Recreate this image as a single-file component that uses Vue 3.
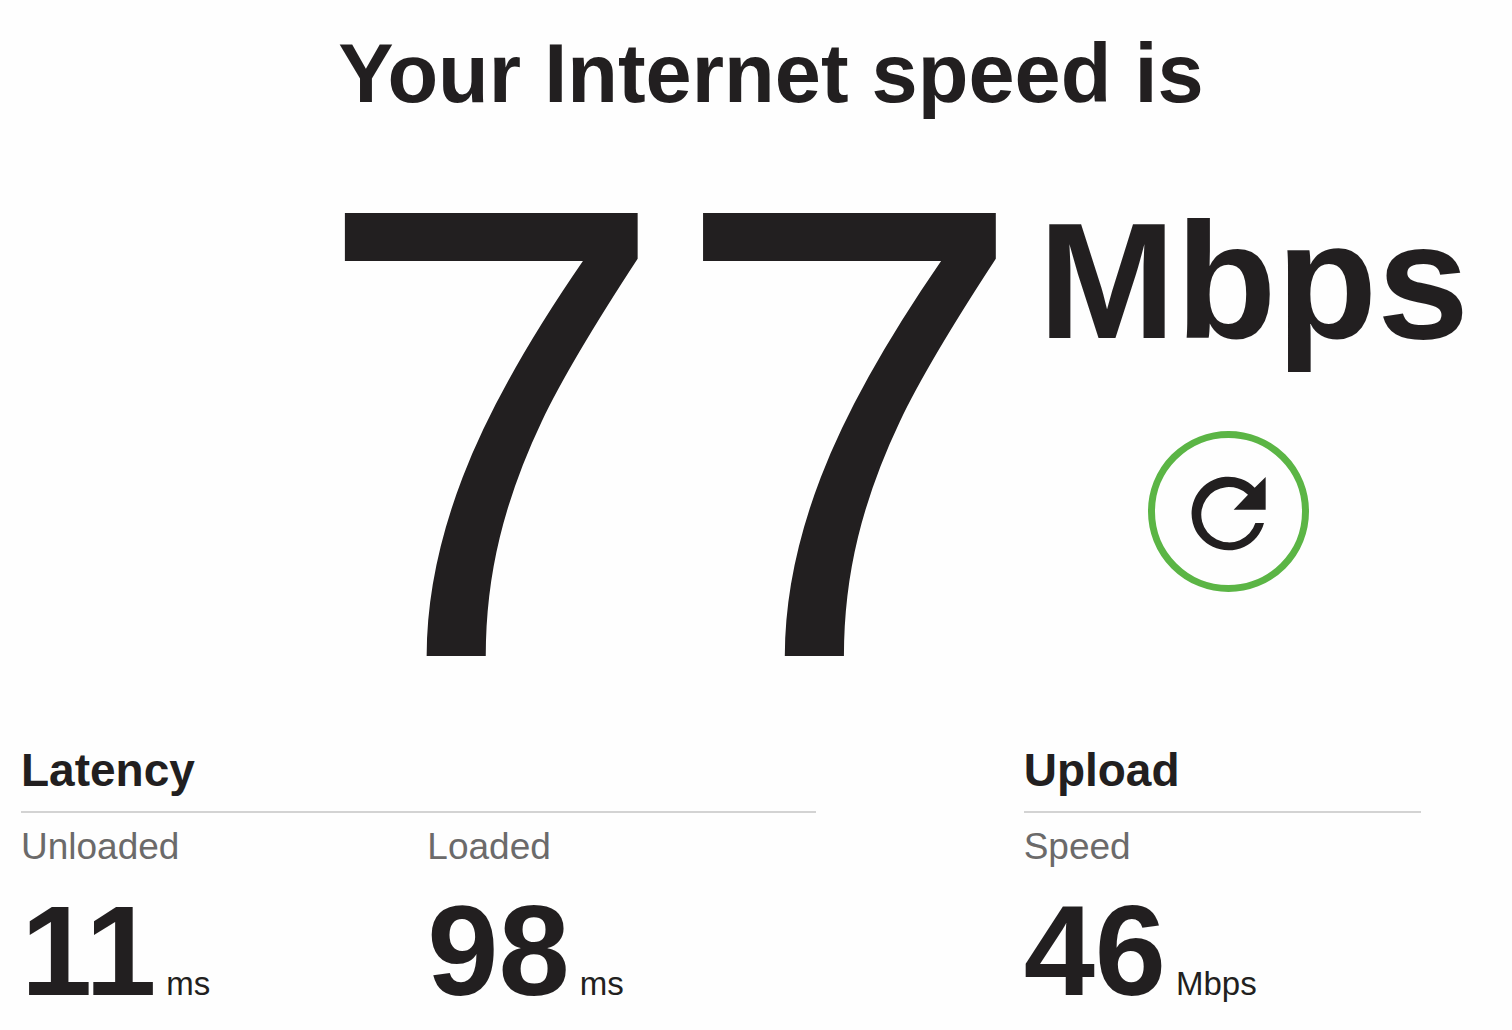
<script setup>
import { ref } from 'vue'

const download = ref({ value: 77, unit: 'Mbps' })

const groups = [
  {
    title: 'Latency',
    metrics: [
      { label: 'Unloaded', value: 11, unit: 'ms' },
      { label: 'Loaded', value: 98, unit: 'ms' },
    ],
  },
  {
    title: 'Upload',
    metrics: [{ label: 'Speed', value: 46, unit: 'Mbps' }],
  },
]
</script>

<template>
  <main class="page">
    <h1 class="title">Your Internet speed is</h1>

    <section class="hero" aria-label="Download speed">
      <span class="speed">{{ download.value }}</span>
      <div class="side">
        <span class="unit">{{ download.unit }}</span>
        <button class="refresh" type="button" aria-label="Test again">
          <svg viewBox="155 171 222 222" aria-hidden="true">
            <path
              d="M371 309A110.5 110.5 0 1 1 343 203L376 171V269H280L323 224A83 83 0 1 0 345 309Z"
              fill="currentColor"
            />
          </svg>
        </button>
      </div>
    </section>

    <div class="details">
      <section v-for="group in groups" :key="group.title">
        <h2 class="group-title">{{ group.title }}</h2>
        <dl class="metrics">
          <div v-for="metric in group.metrics" :key="metric.label" class="metric">
            <dt>{{ metric.label }}</dt>
            <dd>
              <span class="value">{{ metric.value }}</span>
              <span class="metric-unit">{{ metric.unit }}</span>
            </dd>
          </div>
        </dl>
      </section>
    </div>
  </main>
</template>

<style>
body {
  background: #fefefe;
}
</style>

<style scoped>
.page {
  padding-top: 26px;
  font-family: "Liberation Sans", Helvetica, Arial, sans-serif;
  color: #221f20;
}

.title {
  margin: 0;
  padding-left: 30px;
  font-size: 83px;
  line-height: 96px;
  text-align: center;
}

.hero {
  display: flex;
  justify-content: flex-end;
  gap: 10px;
  margin-top: 71px;
  padding-right: 43px;
}

.speed {
  font-size: 644px;
  line-height: 480px;
}

.side {
  display: flex;
  flex-direction: column;
  align-items: flex-start;
  gap: 62px;
}

.unit {
  font-size: 165px;
  font-weight: 700;
  line-height: 176px;
}

.refresh {
  box-sizing: border-box;
  display: flex;
  align-items: center;
  justify-content: center;
  width: 161px;
  height: 161px;
  margin-left: 110px;
  padding: 5px 0 0;
  border: 7px solid #5bb545;
  border-radius: 50%;
  background: none;
  color: inherit;
  cursor: pointer;
}

.refresh svg {
  width: 74px;
  height: 74px;
  overflow: visible;
}

.details {
  display: grid;
  grid-template-columns: 2fr 1fr;
  gap: 208px;
  margin-top: 69px;
  padding: 0 91px 0 21px;
}

.group-title {
  margin: 0;
  padding-bottom: 13px;
  border-bottom: 2px solid #d3d3d3;
  font-size: 46px;
  line-height: 56px;
}

.metrics {
  display: flex;
  gap: 18px;
  margin: 12px 0 0;
}

.metric {
  flex: 1;
}

dt {
  color: #6b6a6a;
  font-size: 37px;
  line-height: 44px;
}

dd {
  display: flex;
  align-items: baseline;
  gap: 10px;
  margin: 18px 0 0;
}

.value {
  font-size: 128px;
  font-weight: 700;
  line-height: 128px;
}

.metric-unit {
  font-size: 33px;
  line-height: 44px;
}
</style>
